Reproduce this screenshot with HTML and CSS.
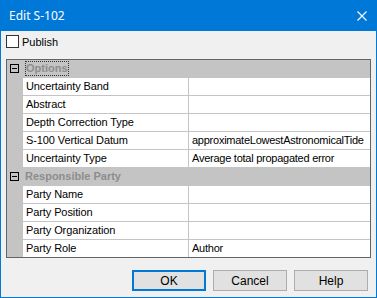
FILE: index.html
```html
<!DOCTYPE html>
<html lang="en">

<head>
    <meta charset="UTF-8">
    <title>Edit S-102</title>
    <link rel="stylesheet" href="styles.css">
</head>

<body>
    <div class="window">
        <div class="titlebar">
            <span class="title">Edit S-102</span>
            <svg class="close" width="10" height="10" viewBox="0 0 10 10">
                <path d="M0.5 0.5 L9.5 9.5 M9.5 0.5 L0.5 9.5" stroke="#fff" stroke-width="1.1" fill="none" />
            </svg>
        </div>

        <div class="content">
            <label class="check">
                <span class="box"></span>
                <span>Publish</span>
            </label>

            <div class="grid">
                <div class="row cat">
                    <span class="margin"><span class="toggle"></span></span>
                    <span class="cat-name"><span class="focus">Options</span></span>
                </div>
                <div class="row">
                    <span class="margin"></span>
                    <span class="name">Uncertainty Band</span>
                    <span class="value"></span>
                </div>
                <div class="row">
                    <span class="margin"></span>
                    <span class="name">Abstract</span>
                    <span class="value"></span>
                </div>
                <div class="row">
                    <span class="margin"></span>
                    <span class="name">Depth Correction Type</span>
                    <span class="value"></span>
                </div>
                <div class="row">
                    <span class="margin"></span>
                    <span class="name">S-100 Vertical Datum</span>
                    <span class="value">approximateLowestAstronomicalTide</span>
                </div>
                <div class="row">
                    <span class="margin"></span>
                    <span class="name">Uncertainty Type</span>
                    <span class="value">Average total propagated error</span>
                </div>
                <div class="row cat">
                    <span class="margin"><span class="toggle"></span></span>
                    <span class="cat-name">Responsible Party</span>
                </div>
                <div class="row">
                    <span class="margin"></span>
                    <span class="name">Party Name</span>
                    <span class="value"></span>
                </div>
                <div class="row">
                    <span class="margin"></span>
                    <span class="name">Party Position</span>
                    <span class="value"></span>
                </div>
                <div class="row">
                    <span class="margin"></span>
                    <span class="name">Party Organization</span>
                    <span class="value"></span>
                </div>
                <div class="row">
                    <span class="margin"></span>
                    <span class="name">Party Role</span>
                    <span class="value">Author</span>
                </div>
            </div>

            <div class="buttons">
                <button class="btn btn-default">OK</button>
                <button class="btn">Cancel</button>
                <button class="btn">Help</button>
            </div>
        </div>
    </div>
</body>

</html>
```

FILE: styles.css
```css
:root {
    --blue: #0078d7;
    --face: #f0f0f0;
    --line: #c4c4c4;
}

* {
    margin: 0;
    padding: 0;
    box-sizing: border-box;
}

body {
    width: 377px;
    height: 298px;
    font-family: "Liberation Sans", Arial, sans-serif;
    font-size: 11px;
    color: #000;
}

.window {
    width: 377px;
    height: 298px;
    border: 1px solid var(--blue);
    border-top: none;
    background-color: var(--face);
    display: flex;
    flex-direction: column;
}

.titlebar {
    height: 31px;
    background-color: var(--blue);
    margin: 0 -1px;
    padding: 0 10px 0 9px;
    display: flex;
    align-items: center;
    justify-content: space-between;
}

.title {
    color: #fff;
    font-family: "Noto Sans", sans-serif;
    font-size: 12px;
}

.close {
    display: block;
}

.content {
    flex: 1;
    padding: 4px 8px 6px 5px;
    display: flex;
    flex-direction: column;
}

.check {
    display: flex;
    align-items: center;
    gap: 3px;
    height: 13px;
}

.box {
    width: 13px;
    height: 13px;
    border: 1px solid #333;
    background-color: #fff;
}

.grid {
    margin-top: 11px;
    width: 365px;
    border: 1px solid #646464;
    background-color: var(--line);
    display: flex;
    flex-direction: column;
    gap: 1px;
}

.row {
    height: 17px;
    display: flex;
    line-height: 17px;
}

.margin {
    width: 16px;
    flex: none;
    position: relative;
}

.name {
    width: 165px;
    flex: none;
    background-color: #fff;
    padding-left: 3px;
    margin-right: 1px;
    white-space: nowrap;
    letter-spacing: -0.1px;
}

.value {
    flex: 1;
    min-width: 0;
    background-color: #fff;
    padding-left: 3px;
    white-space: nowrap;
    letter-spacing: -0.25px;
}

.cat-name {
    flex: 1;
    font-weight: bold;
    color: #8d8d8d;
    padding-left: 2px;
}

.focus {
    display: inline-block;
    line-height: 15px;
    padding: 0 1px;
    margin-top: 1px;
    outline: 1px dotted #333;
    outline-offset: -1px;
}

.toggle {
    position: absolute;
    left: 3px;
    top: 4px;
    width: 9px;
    height: 9px;
    border: 1px solid #000;
}

.toggle::after {
    content: "";
    position: absolute;
    left: 1px;
    top: 3px;
    width: 5px;
    height: 1px;
    background-color: #000;
}

.buttons {
    margin-top: 12px;
    display: flex;
    justify-content: flex-end;
    gap: 7px;
}

.btn {
    width: 74px;
    height: 21px;
    border: 1px solid #adadad;
    background-color: #e1e1e1;
    font-family: "Liberation Sans", Arial, sans-serif;
    font-size: 12px;
    color: #000;
}

.btn-default {
    border: 2px solid var(--blue);
}
```
